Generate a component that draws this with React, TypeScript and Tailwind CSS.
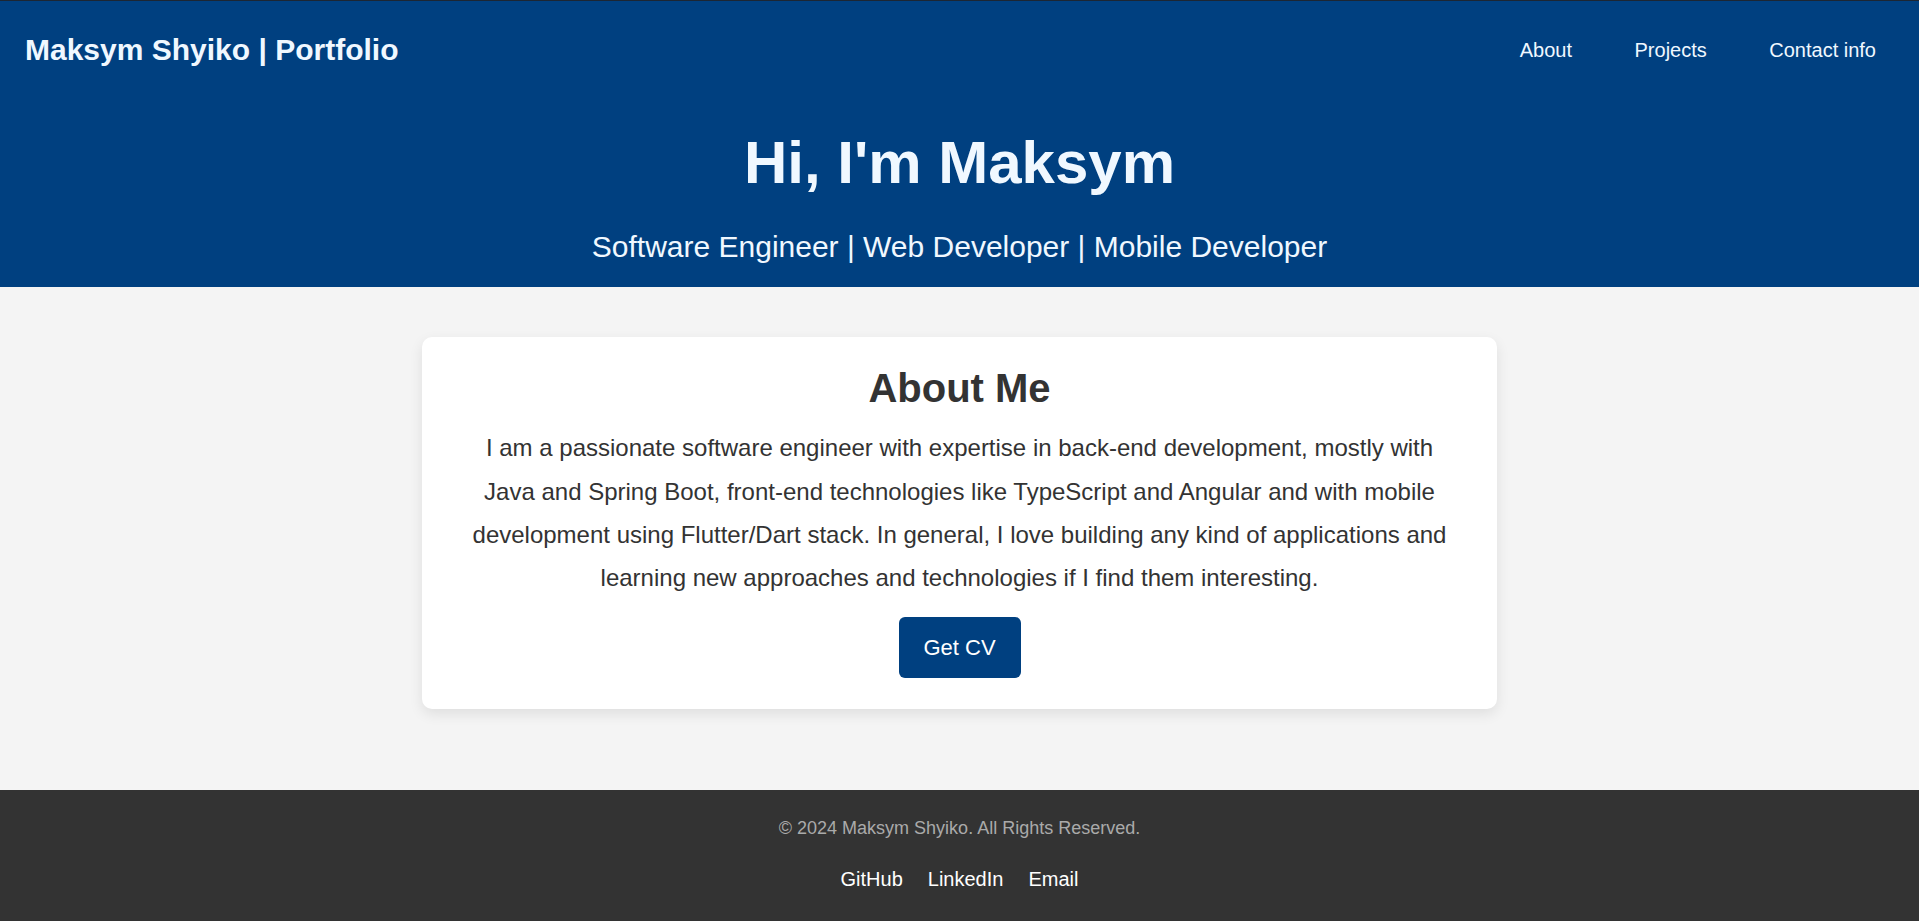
const navLinks = ['About', 'Projects', 'Contact info'];
const footerLinks = ['GitHub', 'LinkedIn', 'Email'];

const App = () => {
    return (
        <div className="min-h-screen flex flex-col bg-[#f4f4f4] text-[#333] font-['Liberation_Sans',Arial,sans-serif]">
            <header className="bg-[#004080] border-t border-[#1c2633] text-[#f0f8ff]">
                <nav className="h-[97px] flex items-center justify-between pl-[25px] pr-[43px]">
                    <h1 className="text-[30px] font-bold leading-normal">Maksym Shyiko | Portfolio</h1>
                    <ul className="flex gap-[62.5px] text-[20px] leading-normal">
                        {navLinks.map((link) => (
                            <li key={link}>
                                <a href="#">{link}</a>
                            </li>
                        ))}
                    </ul>
                </nav>

                <div className="text-center pt-[29.7px] pb-[22.5px]">
                    <h2 className="text-[60px] font-bold leading-[69px]">Hi, I'm Maksym</h2>
                    <p className="mt-[33.3px] text-[30px] leading-[34.5px]">Software Engineer | Web Developer | Mobile Developer</p>
                </div>
            </header>

            {/* about card */}
            <main className="flex-1 pt-[50.5px] pb-[81px]">
                <section className="w-[1075px] mx-auto bg-white rounded-[10px] shadow-[0_5px_14px_rgba(0,0,0,0.09)] px-[40px] pt-[28px] pb-[30.6px] text-center">
                    <h2 className="text-[40px] font-bold leading-[46px]">About Me</h2>
                    <p className="mt-[15px] text-[24px] leading-[43.2px]">
                        I am a passionate software engineer with expertise in back-end development, mostly with Java and Spring Boot, front-end technologies like TypeScript and Angular and with mobile development using Flutter/Dart stack. In general, I love building any kind of applications and learning new approaches and technologies if I find them interesting.
                    </p>
                    <div className="mt-[18px] flex justify-center">
                        <a href="#" className="w-[122px] h-[61px] flex items-center justify-center bg-[#004080] text-white text-[22px] rounded-[6px]">
                            Get CV
                        </a>
                    </div>
                </section>
            </main>

            <footer className="bg-[#333] text-center pt-[28.4px] pb-[30.4px]">
                <p className="text-[18px] leading-[20.7px] text-[#aaa]">© 2024 Maksym Shyiko. All Rights Reserved.</p>
                <div className="mt-[28.5px] flex justify-center gap-[25px] text-[20px] leading-[23px] text-white">
                    {footerLinks.map((link) => (
                        <a key={link} href="#">{link}</a>
                    ))}
                </div>
            </footer>
        </div>
    );
}

export default App;
